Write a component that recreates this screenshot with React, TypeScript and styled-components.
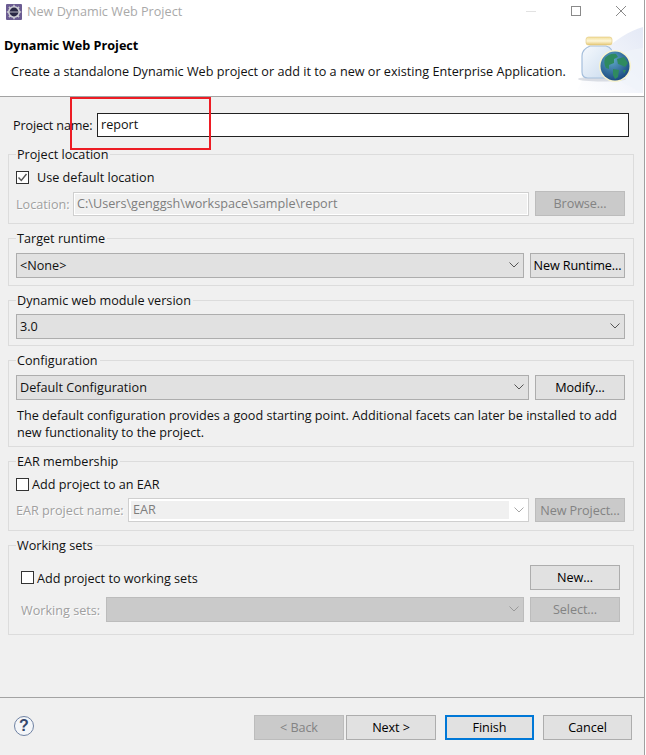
import React from 'react';
import styled, { createGlobalStyle } from 'styled-components';

const GlobalStyle = createGlobalStyle`
  html, body {
    margin: 0;
    padding: 0;
    background: #ffffff;
  }
  body {
    font-family: "Open Sans", "Noto Sans", sans-serif;
    font-size: 12.65px;
    color: #111111;
  }
`;

const Window = styled.div`
  position: relative;
  width: 645px;
  height: 755px;
  box-sizing: border-box;
  border-right: 1px solid #a0a0a0;
  background: #f0f0f0;
  display: flex;
  flex-direction: column;
  overflow: hidden;
`;

const TitleBar = styled.div`
  height: 24px;
  background: #ffffff;
  display: flex;
  align-items: center;
  padding-left: 6px;
  gap: 5px;
  color: #a9a9a9;
`;

const TitleText = styled.div`
  flex: 1;
  margin-top: -2px;
`;

const WindowControls = styled.div`
  display: flex;
  align-items: center;
  margin-top: -3px;
  margin-right: 18px;
  gap: 35px;
`;

const Header = styled.div`
  height: 72px;
  background: #ffffff;
  border-bottom: 1px solid #a3a3a3;
  display: flex;
  justify-content: space-between;
`;

const HeaderText = styled.div`
  padding: 12px 0 0 4px;
`;

const HeaderTitle = styled.div`
  font-weight: 700;
  line-height: 18px;
  color: #000000;
`;

const HeaderDesc = styled.div`
  margin: 8px 0 0 7px;
  line-height: 18px;
  white-space: nowrap;
`;

const Body = styled.div`
  flex: 1;
  padding: 16px 10px 0 8px;
  display: flex;
  flex-direction: column;
  gap: 14px;
`;

const NameRow = styled.div`
  display: flex;
  align-items: center;
  height: 24px;
  margin-bottom: 3px;
  padding-left: 5px;
  padding-right: 5px;
`;

const NameLabel = styled.div`
  width: 84px;
  flex: none;
  letter-spacing: -0.15px;
`;

const NameInput = styled.div`
  flex: 1;
  height: 24px;
  box-sizing: border-box;
  border: 1px solid #222222;
  background: #ffffff;
  padding-left: 3px;
  line-height: 21px;
`;

const Highlight = styled.div`
  position: absolute;
  left: 70px;
  top: 97px;
  width: 141px;
  height: 53px;
  box-sizing: border-box;
  border: 2px solid #ed1c24;
`;

const Group = styled.div<{ $height: number; $top: number }>`
  position: relative;
  box-sizing: border-box;
  height: ${p => p.$height}px;
  border: 1px solid #dcdcdc;
  padding: ${p => p.$top}px 8px 0 7px;
  display: flex;
  flex-direction: column;
`;

const Legend = styled.div`
  position: absolute;
  top: -10px;
  left: 7px;
  padding: 0 2px 0 1px;
  line-height: 18px;
  background: #f0f0f0;
`;

const Row = styled.div<{ $gap?: number; $mt?: number; $indent?: number }>`
  display: flex;
  align-items: center;
  gap: ${p => p.$gap ?? 6}px;
  margin-top: ${p => p.$mt ?? 0}px;
  padding-left: ${p => p.$indent ?? 0}px;
`;

const CheckRow = styled.div<{ $gap?: number; $grow?: boolean }>`
  flex: ${p => (p.$grow ? '1' : 'none')};
  display: flex;
  align-items: center;
  gap: ${p => p.$gap ?? 3}px;
  height: 18px;
`;

const CheckBox = styled.div`
  width: 13px;
  height: 13px;
  box-sizing: border-box;
  flex: none;
  border: 1px solid #333333;
  background: #ffffff;
  display: flex;
  align-items: center;
  justify-content: center;
`;

const DisabledLabel = styled.div<{ $width: number }>`
  width: ${p => p.$width}px;
  flex: none;
  color: #a0a0a0;
  text-shadow: 1px 1px 0 #ffffff;
  white-space: nowrap;
`;

const Field = styled.div`
  flex: 1;
  height: 24px;
  box-sizing: border-box;
  border: 1px solid #cfcfcf;
  outline: 1px solid #ffffff;
  outline-offset: -2px;
  background: #f0f0f0;
  padding-left: 3px;
  color: #7e7e7e;
  line-height: 20px;
  white-space: nowrap;
  overflow: hidden;
`;

const EarCombo = styled.div`
  flex: 1;
  height: 24px;
  box-sizing: border-box;
  border: 1px solid #cfcfcf;
  background: #ffffff;
  display: flex;
  align-items: center;
  padding: 2px 0 2px 2px;
  color: #7e7e7e;
`;

const EarValue = styled.div`
  flex: 1;
  height: 100%;
  background: #f0f0f0;
  padding-left: 2px;
  line-height: 16px;
`;

const Arrow = styled.div`
  width: 19px;
  flex: none;
  display: flex;
  align-items: center;
  justify-content: center;
`;

const Combo = styled.div<{ $disabled?: boolean }>`
  flex: 1;
  height: 25px;
  box-sizing: border-box;
  border: 1px solid ${p => (p.$disabled ? '#bcbcbc' : '#adadad')};
  background: ${p => (p.$disabled ? '#cacaca' : '#e1e1e1')};
  display: flex;
  align-items: center;
  padding: 0 0 1px 3px;
`;

const ComboValue = styled.div`
  flex: 1;
  white-space: nowrap;
`;

const Button = styled.div<{ $width?: number; $disabled?: boolean; $focused?: boolean; $height?: number; $inset?: number }>`
  width: ${p => p.$width ?? 90}px;
  height: ${p => p.$height ?? 25}px;
  margin-right: ${p => p.$inset ?? 0}px;
  flex: none;
  box-sizing: border-box;
  border: ${p => (p.$focused ? '2px solid #0078d7' : `1px solid ${p.$disabled ? '#bcbcbc' : '#adadad'}`)};
  background: ${p => (p.$disabled ? '#cacaca' : '#e1e1e1')};
  color: ${p => (p.$disabled ? '#838383' : '#000000')};
  display: flex;
  align-items: center;
  justify-content: center;
  padding-bottom: 1px;
  white-space: nowrap;
  letter-spacing: -0.1px;
`;

const Description = styled.div`
  margin-top: 7px;
  padding-left: 1px;
  line-height: 17px;
`;

const Footer = styled.div`
  height: 58px;
  box-sizing: border-box;
  border-top: 1px solid #a3a3a3;
  display: flex;
  align-items: flex-start;
  padding: 17px 12px 0 14px;
`;

const HelpIcon = styled.div`
  width: 20px;
  height: 20px;
  margin-top: 1px;
  box-sizing: border-box;
  border: 1.5px solid #6f82a3;
  border-radius: 50%;
  background: #f4f6f9;
  color: #35476c;
  font-family: "Liberation Sans", sans-serif;
  font-weight: 700;
  font-size: 16px;
  line-height: 17px;
  text-align: center;
`;

const FooterButtons = styled.div`
  margin-left: auto;
  display: flex;
  gap: 9px;
`;

const BackNext = styled.div`
  display: flex;
  gap: 2px;
`;

const Chevron = ({ color = '#555555' }: { color?: string }) => (
  <svg width="10" height="6" viewBox="0 0 10 6">
    <path d="M0.5 0.5 L5 5 L9.5 0.5" fill="none" stroke={color} strokeWidth="1" />
  </svg>
);

const ArrowCell = ({ color }: { color?: string }) => (
  <Arrow>
    <Chevron color={color} />
  </Arrow>
);

const AppIcon = () => (
  <svg width="16" height="16" viewBox="0 0 16 16">
    <rect width="16" height="16" rx="1" fill="#6b5c92" />
    <path d="M8 0.8 v2.4 M8 12.8 v2.4 M0.8 8 h2.4 M12.8 8 h2.4 M2.9 2.9 l1.6 1.6 M11.5 11.5 l1.6 1.6 M13.1 2.9 l-1.6 1.6 M4.5 11.5 l-1.6 1.6" stroke="#c6c6ce" strokeWidth="1.6" />
    <circle cx="8" cy="8" r="6" fill="#cfcfd6" />
    <circle cx="8" cy="8" r="4.4" fill="#2b2946" />
    <path d="M3.8 8 h8.4" stroke="#d9d9e0" strokeWidth="0.8" />
  </svg>
);

const MinimizeIcon = () => (
  <svg width="10" height="10" viewBox="0 0 10 10">
    <path d="M0 5.5 H10" stroke="#e2e2e2" strokeWidth="1" />
  </svg>
);

const MaximizeIcon = () => (
  <svg width="10" height="10" viewBox="0 0 10 10">
    <rect x="0.5" y="0.5" width="9" height="9" fill="none" stroke="#8a8a8a" strokeWidth="1" />
  </svg>
);

const CloseIcon = () => (
  <svg width="10" height="10" viewBox="0 0 10 10">
    <path d="M0 0 L10 10 M10 0 L0 10" stroke="#8a8a8a" strokeWidth="1" />
  </svg>
);

const CheckMark = () => (
  <svg width="11" height="11" viewBox="0 0 11 11">
    <path d="M1.5 5.5 L4.3 8.5 L9.5 2" fill="none" stroke="#555555" strokeWidth="1.4" />
  </svg>
);

const BannerArt = () => (
  <svg width="68" height="72" viewBox="0 0 68 72">
    <defs>
      <linearGradient id="bg" x1="0" y1="1" x2="1" y2="0">
        <stop offset="0" stopColor="#ffffff" />
        <stop offset="1" stopColor="#e4e9f6" />
      </linearGradient>
      <linearGradient id="lid" x1="0" y1="0" x2="0" y2="1">
        <stop offset="0" stopColor="#f3df9a" />
        <stop offset="0.5" stopColor="#fdf6d8" />
        <stop offset="1" stopColor="#e6c873" />
      </linearGradient>
      <linearGradient id="glass" x1="0" y1="0" x2="1" y2="1">
        <stop offset="0" stopColor="#f6f9fd" />
        <stop offset="1" stopColor="#c9dbee" />
      </linearGradient>
      <radialGradient id="ocean" cx="0.4" cy="0.3" r="0.8">
        <stop offset="0" stopColor="#5fa8c8" />
        <stop offset="1" stopColor="#123f78" />
      </radialGradient>
    </defs>
    <path d="M67 3 C38 12 14 36 0 69 L67 69 Z" fill="url(#bg)" />
    <path d="M67 24 C48 26 30 34 22 46 L67 69 Z" fill="#f0f3fa" opacity="0.7" />
    <ellipse cx="26" cy="55" rx="24" ry="2.5" fill="#c4cad4" opacity="0.6" />
    <path d="M14 22 H30 C35 23 37 27 37 33 V48 C37 52 34 54 30 54 H12 C8 54 6 52 6 48 V32 C6 27 9 24 14 22 Z" fill="url(#glass)" stroke="#a6bfdc" strokeWidth="1.2" />
    <rect x="10" y="13" width="26" height="8" rx="2.5" fill="url(#lid)" stroke="#e0c77e" strokeWidth="0.6" />
    <circle cx="39" cy="42" r="16" fill="#f8f3cf" />
    <circle cx="39" cy="42" r="14.5" fill="url(#ocean)" />
    <path d="M29 34 C32 30 37 29 40 30 L42 33 L38 35 L38 39 L33 41 L33 45 L30 44 C28 41 28 37 29 34 Z" fill="#2f8a5f" />
    <path d="M41 35 L48 33 L52 39 L49 43 L45 41 L42 40 Z" fill="#2f8a5f" />
    <path d="M37 45 L43 46 L42 53 L39 55 L37 51 Z" fill="#2f8a5f" />
    <path d="M47 46 L50 46 L48 50 Z" fill="#2f8a5f" />
  </svg>
);

export default function App() {
  return (
    <>
      <GlobalStyle />
      <Window>
        <TitleBar>
          <AppIcon />
          <TitleText>New Dynamic Web Project</TitleText>
          <WindowControls>
            <MinimizeIcon />
            <MaximizeIcon />
            <CloseIcon />
          </WindowControls>
        </TitleBar>
        <Header>
          <HeaderText>
            <HeaderTitle>Dynamic Web Project</HeaderTitle>
            <HeaderDesc>Create a standalone Dynamic Web project or add it to a new or existing Enterprise Application.</HeaderDesc>
          </HeaderText>
          <BannerArt />
        </Header>
        <Body>
          <NameRow>
            <NameLabel>Project name:</NameLabel>
            <NameInput>report</NameInput>
          </NameRow>

          <Group $height={70} $top={13}>
            <Legend>Project location</Legend>
            <CheckRow $gap={8}>
              <CheckBox><CheckMark /></CheckBox>
              <span>Use default location</span>
            </CheckRow>
            <Row $mt={5}>
              <DisabledLabel $width={51}>Location:</DisabledLabel>
              <Field>C:\Users\genggsh\workspace\sample\report</Field>
              <Button $disabled>Browse...</Button>
            </Row>
          </Group>

          <Group $height={48} $top={14}>
            <Legend>Target runtime</Legend>
            <Row>
              <Combo>
                <ComboValue>&lt;None&gt;</ComboValue>
                <ArrowCell />
              </Combo>
              <Button $width={95}>New Runtime...</Button>
            </Row>
          </Group>

          <Group $height={46} $top={13}>
            <Legend>Dynamic web module version</Legend>
            <Row>
              <Combo>
                <ComboValue>3.0</ComboValue>
                <ArrowCell />
              </Combo>
            </Row>
          </Group>

          <Group $height={87} $top={14}>
            <Legend>Configuration</Legend>
            <Row>
              <Combo>
                <ComboValue>Default Configuration</ComboValue>
                <ArrowCell />
              </Combo>
              <Button>Modify...</Button>
            </Row>
            <Description>
              The default configuration provides a good starting point. Additional facets can later be installed to add new functionality to the project.
            </Description>
          </Group>

          <Group $height={70} $top={13}>
            <Legend>EAR membership</Legend>
            <CheckRow>
              <CheckBox />
              <span>Add project to an EAR</span>
            </CheckRow>
            <Row $mt={5}>
              <DisabledLabel $width={106}>EAR project name:</DisabledLabel>
              <EarCombo>
                <EarValue>EAR</EarValue>
                <ArrowCell color="#a8a8a8" />
              </EarCombo>
              <Button $disabled $height={24}>New Project...</Button>
            </Row>
          </Group>

          <Group $height={90} $top={19}>
            <Legend>Working sets</Legend>
            <Row $indent={5}>
              <CheckRow $grow>
                <CheckBox />
                <span>Add project to working sets</span>
              </CheckRow>
              <Button $inset={5}>New...</Button>
            </Row>
            <Row $indent={5} $mt={7}>
              <DisabledLabel $width={79}>Working sets:</DisabledLabel>
              <Combo $disabled>
                <ComboValue />
                <ArrowCell color="#9a9a9a" />
              </Combo>
              <Button $disabled $inset={5}>Select...</Button>
            </Row>
          </Group>
        </Body>
        <Footer>
          <HelpIcon>?</HelpIcon>
          <FooterButtons>
            <BackNext>
              <Button $disabled>&lt; Back</Button>
              <Button>Next &gt;</Button>
            </BackNext>
            <Button $focused $width={89}>Finish</Button>
            <Button $width={89}>Cancel</Button>
          </FooterButtons>
        </Footer>
        <Highlight />
      </Window>
    </>
  );
}
